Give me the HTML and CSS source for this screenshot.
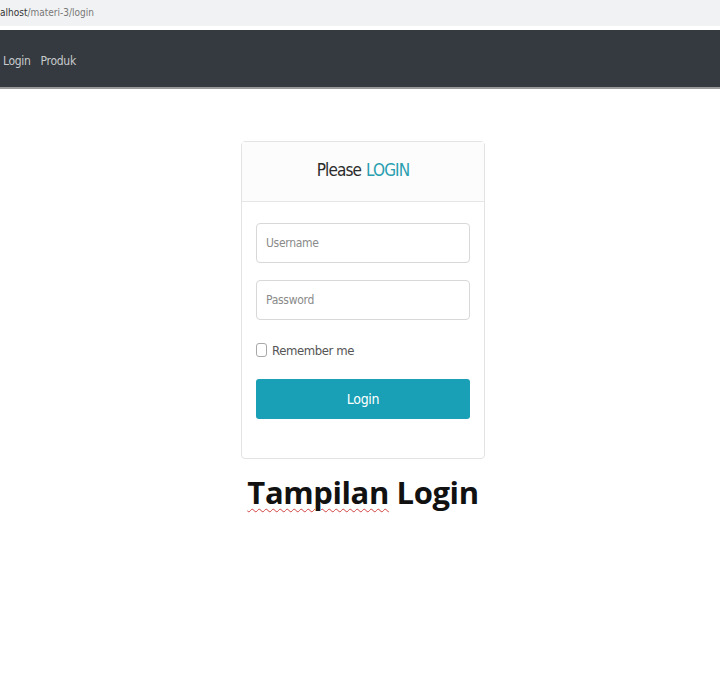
FILE: index.html
```html
<!DOCTYPE html>
<html>
<head>
<meta charset="utf-8">
<link rel="stylesheet" href="styles.css">
</head>
<body>
<div class="addr"><span class="host">alhost</span>/materi-3/login</div>
<nav class="navbar"><a class="nav-link">Login</a><a class="nav-link">Produk</a></nav>
<main class="main">
  <div class="card">
    <div class="card-header">Please <span class="accent">LOGIN</span></div>
    <div class="card-body">
      <div class="input">Username</div>
      <div class="input">Password</div>
      <label class="check"><span class="box"></span>Remember me</label>
      <div class="btn">Login</div>
    </div>
  </div>
  <div class="caption"><span class="spell">Tampilan</span> Login</div>
</main>
</body>
</html>
```
FILE: styles.css
```css
* { box-sizing: border-box; }
body {
  margin: 0;
  width: 720px;
  height: 690px;
  background: #fff;
  font-family: "DejaVu Sans", sans-serif;
  font-stretch: condensed;
  overflow: hidden;
}
.addr {
  height: 30px;
  background: #f1f2f3;
  color: #777;
  font-size: 10px;
  padding: 7px 0 0 0;
  border-bottom: 4px solid #fff;
}
.host { color: #333; }
.navbar {
  height: 59px;
  background: #343a40;
  display: flex;
  align-items: center;
  gap: 10px;
  padding: 5px 0 0 3px;
  border-bottom: 2px solid #9a9a9a;
}
.nav-link {
  color: #c8cacc;
  font-size: 12px;
  letter-spacing: -0.3px;
}
.main {
  display: flex;
  flex-direction: column;
  align-items: center;
  padding-top: 52px;
}
.card {
  width: 244px;
  border: 1px solid #e3e3e3;
  border-radius: 4px;
  margin-left: 6px;
}
.card-header {
  height: 60px;
  border-bottom: 1px solid #e6e6e6;
  background: #fcfcfc;
  display: flex;
  align-items: center;
  justify-content: center;
  padding-bottom: 4px;
  font-size: 17px;
  font-weight: 500;
  color: #2b2b2b;
  letter-spacing: -0.9px;
}
.accent { color: #2a9fb0; margin-left: 5px; }
.card-body {
  padding: 21px 14px 39px 14px;
  display: flex;
  flex-direction: column;
}
.input {
  height: 40px;
  border: 1px solid #d8d8d8;
  border-radius: 4px;
  padding-left: 9px;
  display: flex;
  align-items: center;
  color: #8a8a8a;
  font-size: 12px;
  letter-spacing: -0.3px;
  margin-bottom: 17px;
}
.check {
  display: flex;
  align-items: center;
  font-size: 13px;
  color: #555;
  letter-spacing: -0.4px;
  margin-top: 6px;
  height: 14px;
}
.box {
  width: 11px;
  height: 14px;
  border: 1px solid #a8a8a8;
  border-radius: 3px;
  margin-right: 5px;
}
.btn {
  margin-top: 22px;
  height: 40px;
  background: #19a0b6;
  border-radius: 3px;
  color: #fff;
  display: flex;
  align-items: center;
  justify-content: center;
  font-size: 14px;
  letter-spacing: -0.3px;
}
.caption {
  margin-top: 12px;
  margin-left: 6px;
  font-family: "Open Sans", sans-serif;
  font-stretch: normal;
  font-weight: 700;
  font-size: 31px;
  color: #111;
  letter-spacing: -0.4px;
}
.spell {
  text-decoration: underline wavy #d24040;
  text-decoration-thickness: 1px;
  text-underline-offset: 4px;
}
```
